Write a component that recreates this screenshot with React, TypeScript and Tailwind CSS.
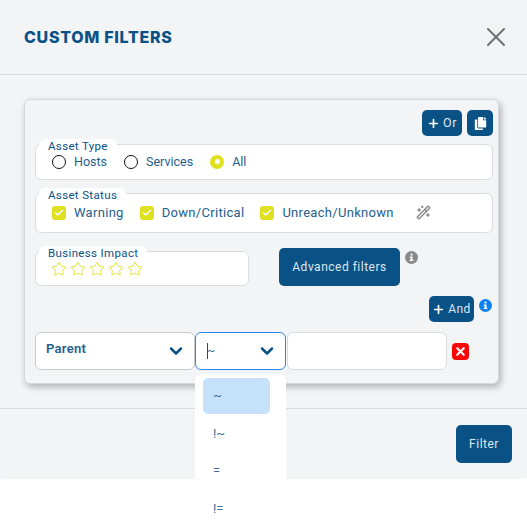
import { X, Plus, ChevronDown, Star, WandSparkles, Check } from "lucide-react";
import { FaCopy } from "react-icons/fa";

const blue = "text-[#0a5185]";

function Legend({ children }: { children: string }) {
  return (
    <span className="absolute left-[3px] top-[-6px] rounded-t-[6px] bg-white px-[9px] text-[11.5px] leading-[14px] tracking-[0.35px] text-[#0a5185]">
      {children}
    </span>
  );
}

function Radio({ label, on }: { label: string; on?: boolean }) {
  return (
    <div className="flex items-center gap-[8px]">
      {on ? (
        <span className="flex h-[14px] w-[14px] items-center justify-center rounded-full bg-[#e0e022]">
          <span className="h-[5px] w-[5px] rounded-full bg-white" />
        </span>
      ) : (
        <span className="h-[14px] w-[14px] rounded-full border-[1.5px] border-[#111] bg-white" />
      )}
      <span className="text-[12.5px] leading-[16px] text-[#24608f]">{label}</span>
    </div>
  );
}

function Check2({ label }: { label: string }) {
  return (
    <div className="flex items-center gap-[8px]">
      <span className="flex h-[14px] w-[14px] items-center justify-center rounded-[3px] bg-[#e0e022]">
        <Check size={10} strokeWidth={3.5} className="text-white" />
      </span>
      <span className="text-[13px] leading-[16px] tracking-[0.3px] text-[#24608f]">{label}</span>
    </div>
  );
}

function InfoDot({ color }: { color: string }) {
  return (
    <svg width="13" height="13" viewBox="0 0 13 13" className="shrink-0">
      <circle cx="6.5" cy="6.5" r="6.5" fill={color} />
      <rect x="5.5" y="2.6" width="2" height="2" rx="0.6" fill="#fff" />
      <path d="M4.8 5.5h2.7v3.3h0.9v1.2H4.7V8.8h0.9V6.7H4.8z" fill="#fff" />
    </svg>
  );
}

export default function App() {
  return (
    <div className="relative h-[529px] w-[527px] overflow-hidden bg-white font-['Roboto',sans-serif]">
      <div className="h-[479px] rounded-b-[3px] bg-[#f2f4f6]">
        <header className="flex h-[75px] items-center justify-between border-b border-[#d9dbde] pl-[24px] pr-[15px] pb-[1px]">
          <h1 className={`font-['Inter',sans-serif] text-[16px] font-extrabold leading-[20px] tracking-[0.7px] ${blue}`}>CUSTOM FILTERS</h1>
          <X size={32} strokeWidth={1.5} className="text-[#6f7072]" />
        </header>

        <div className="h-[334px] border-b border-[#d9dbde] pl-[24px] pr-[28px] pt-[24px]">
          <div className="h-[285px] rounded-[6px] border border-[#d5d7da] bg-[#f2f4f6] pl-[10px] pr-[5px] pt-[10px] shadow-[2px_3px_7px_rgba(0,0,0,0.28)]">
            <div className="flex justify-end gap-[5px]">
              <button className="flex h-[26px] w-[40px] items-center justify-center gap-[3px] rounded-[5px] bg-[#0a5185] text-[12.5px] tracking-[0.5px] text-[#dfe7ee]">
                <Plus size={13} strokeWidth={3.2} className="text-white" />
                Or
              </button>
              <button className="flex h-[26px] w-[26px] items-center justify-center rounded-[5px] bg-[#0a5185]">
                <FaCopy size={13} className="text-white" />
              </button>
            </div>

            <div className="relative mt-[8px] flex h-[36px] items-center gap-[17px] rounded-[6px] border border-[#d9dbde] bg-white pl-[16px] pb-[1px]">
              <Legend>Asset Type</Legend>
              <Radio label="Hosts" />
              <Radio label="Services" />
              <Radio label="All" on />
            </div>

            <div className="relative mt-[13px] flex h-[40px] items-center gap-[16px] rounded-[6px] border border-[#d9dbde] bg-white pl-[16px] pb-[1px]">
              <Legend>Asset Status</Legend>
              <Check2 label="Warning" />
              <Check2 label="Down/Critical" />
              <Check2 label="Unreach/Unknown" />
              <WandSparkles size={15} strokeWidth={2.2} className="ml-[6px] text-[#8a8a8a]" />
            </div>

            <div className="mt-[15px] flex items-start">
              <div className="relative mt-[3px] flex h-[35px] w-[214px] items-center gap-[3px] rounded-[6px] border border-[#d9dbde] bg-white pl-[15px] pt-[1px]">
                <Legend>Business Impact</Legend>
                {[0, 1, 2, 3, 4].map((i) => (
                  <Star key={i} size={16} strokeWidth={1.4} className="text-[#e0e022]" />
                ))}
              </div>
              <button className="ml-[30px] h-[38px] w-[121px] rounded-[5px] bg-[#0a5185] text-[12px] tracking-[0.5px] text-[#dfe7ee]">
                Advanced filters
              </button>
              <span className="ml-[5px] mt-[3px]"><InfoDot color="#8a8a8a" /></span>
            </div>

            <div className="mr-[1px] mt-[10px] flex items-start justify-end gap-[5px]">
              <button className="flex h-[26px] w-[45px] items-center justify-center gap-[3px] rounded-[5px] bg-[#0a5185] text-[12px] tracking-[0.5px] text-[#dfe7ee]">
                <Plus size={13} strokeWidth={3.2} className="text-white" />
                And
              </button>
              <span className="mt-[3px]"><InfoDot color="#0d80f2" /></span>
            </div>

            <div className="mt-[10px] flex items-center">
              <div className="flex h-[38px] w-[160px] items-center justify-between rounded-[6px] border border-[#c9cbce] bg-white pl-[10px] pr-[8px]">
                <span className="pb-[4px] text-[13px] font-semibold tracking-[0.3px] text-[#24608f]">Parent</span>
                <ChevronDown size={20} strokeWidth={3} className={blue} />
              </div>
              <div className="relative h-[38px] w-[91px]">
                <div className="flex h-full items-center justify-between rounded-[6px] border border-[#2f86ea] bg-white pl-[11px] pr-[8px]">
                  <span className="flex items-center text-[12px] text-[#3a6f98]">
                    <span className="h-[16px] w-px bg-[#0a5185]" />
                    <span className="-ml-px">~</span>
                  </span>
                  <ChevronDown size={20} strokeWidth={3} className={blue} />
                </div>
                <ul className="absolute left-0 top-[42px] z-10 h-[155px] w-[91px] rounded-[6px] bg-white pl-[8px] pt-[4px] text-[13px] text-[#3a6f98]">
                  <li className="flex h-[36px] w-[67px] items-center rounded-[5px] bg-[#c6e2fb] pl-[10px]">~</li>
                  <li className="mt-[1px] flex h-[37px] items-center pl-[10px]">!~</li>
                  <li className="flex h-[37px] items-center pl-[10px]">=</li>
                  <li className="mt-[1px] flex h-[37px] items-center pl-[10px]">!=</li>
                </ul>
              </div>
              <div className="ml-px h-[38px] w-[160px] rounded-[6px] border border-[#d9dbde] bg-white" />
              <span className="ml-[5px] flex h-[17px] w-[17px] items-center justify-center rounded-[4px] bg-[#fb0606]">
                <X size={13} strokeWidth={4} className="text-white" />
              </span>
            </div>
          </div>
        </div>

        <footer className="flex justify-end pr-[15px] pt-[16px]">
          <button className="h-[38px] w-[56px] rounded-[5px] bg-[#0a5185] text-[12px] tracking-[0.5px] text-[#dfe7ee]">Filter</button>
        </footer>
      </div>
    </div>
  );
}
